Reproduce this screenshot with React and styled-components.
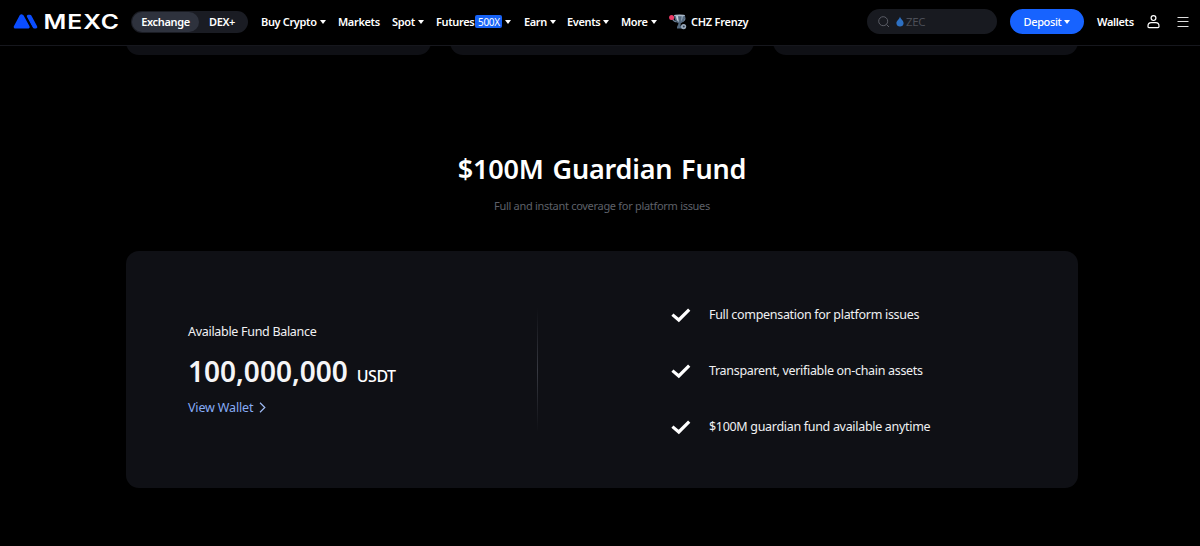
import React from 'react';
import styled, { createGlobalStyle } from 'styled-components';

const navItems = [
	{ label: 'Buy Crypto', width: 77, arrow: true },
	{ label: 'Markets', width: 54 },
	{ label: 'Spot', width: 44, arrow: true },
	{ label: 'Futures', width: 88, badge: '500X', arrow: true },
	{ label: 'Earn', width: 43, arrow: true },
	{ label: 'Events', width: 54, arrow: true },
	{ label: 'More', width: 48, arrow: true },
];

const benefits = [
	'Full compensation for platform issues',
	'Transparent, verifiable on-chain assets',
	'$100M guardian fund available anytime',
];

function Logo() {
	return (
		<svg width="112" height="24" viewBox="0 -3 112 24">
			<g fill="#0b4dff" stroke="#0b4dff" strokeWidth="3" strokeLinejoin="round">
				<path d="M2.2 13.9 L7.9 3.1 Q8.5 2.6 9.2 3.1 L15.2 13.9 Z" />
				<path d="M15.2 3.2 L17 3.2 L22.8 13.9 L21.2 13.9 Z" />
			</g>
			<path d="M12.4 2 L19.4 15.6" stroke="#000" strokeWidth="0.9" />
			<text
				x="30.5"
				y="15.8"
				textLength="76.5"
				lengthAdjust="spacingAndGlyphs"
				fill="#fff"
				fontFamily="Inter, sans-serif"
				fontSize="20"
				fontWeight="600"
				letterSpacing="0.8"
			>
				MEXC
			</text>
		</svg>
	);
}

function Trophy() {
	return (
		<svg width="18" height="16" viewBox="0 0 18 16">
			<path d="M3.5 2.5 Q3 7 7.5 8 M15.5 2.5 Q17 7 12 8" fill="none" stroke="#71859b" strokeWidth="1.2" />
			<path d="M5 1 H16 Q15.5 8 11.8 9.2 L11.5 12 H14 V14.5 H8 V13 L9.6 9.4 Q5.5 8 5 1 Z" fill="#52677d" />
			<path d="M7 2 H9 L9.8 8 Q7.3 6.5 7 2 Z" fill="#c3d0dc" />
			<path d="M12.6 2 H14 Q13.8 6 12 7.5 Z" fill="#8ea2b5" />
			<ellipse cx="10.5" cy="1.4" rx="5.4" ry="0.9" fill="#a9b8c8" />
			<circle cx="2.6" cy="3.4" r="2.5" fill="#ee3b67" />
			<circle cx="14.6" cy="12.6" r="2.6" fill="#9aa9ba" />
			<path d="M13.6 12 L15 11.4 L15.9 12.6 L14.8 13.8 Z" fill="#2c3c50" />
		</svg>
	);
}

function SearchIcon() {
	return (
		<svg width="12" height="12" viewBox="0 0 12 12" fill="none" stroke="#5b5d66">
			<circle cx="5.2" cy="5.2" r="4.5" />
			<path d="M8.5 8.5 L11 11" />
		</svg>
	);
}

function Drop() {
	return (
		<svg width="8" height="11" viewBox="0 0 8 11">
			<path d="M4 0.5 C4.4 3 7.6 4.4 7.6 7.2 C7.6 9.2 6 10.5 4 10.5 C2 10.5 0.4 9.2 0.4 7.2 C0.4 4.8 3.4 3.4 4 0.5 Z" fill="#2d70c2" />
		</svg>
	);
}

function UserIcon() {
	return (
		<svg width="13" height="14" viewBox="0 0 13 14" fill="none" stroke="#fff" strokeWidth="1.2">
			<circle cx="6.5" cy="3.1" r="2.4" />
			<path d="M4.2 7.7 H8.8 C10.6 7.7 12 9.2 12 11 V11.6 Q12 12.6 11 12.6 H2 Q1 12.6 1 11.6 V11 C1 9.2 2.4 7.7 4.2 7.7 Z" />
		</svg>
	);
}

function MenuIcon() {
	return (
		<svg width="12" height="10" viewBox="0 0 12 10" stroke="#dedede" strokeWidth="1">
			<path d="M0.5 0.5 H11.5 M0.5 4.5 H11.5 M0.5 9.5 H11.5" />
		</svg>
	);
}

function Check() {
	return (
		<svg width="20" height="16" viewBox="0 0 20 16">
			<path d="M1.4 7.6 L7.8 13 L18.2 2.6" fill="none" stroke="#fff" strokeWidth="3.2" />
		</svg>
	);
}

export default function App() {
	return (
		<Page>
			<GlobalStyle />
			<Header>
				<LogoLink><Logo /></LogoLink>
				<Switcher>
					<SwitchOption $active>Exchange</SwitchOption>
					<SwitchOption>DEX+</SwitchOption>
				</Switcher>
				<Nav>
					{navItems.map((item) => (
						<NavItem key={item.label} $width={item.width}>
							{item.label}
							{item.badge && <Badge>{item.badge}</Badge>}
							{item.arrow && <Arrow />}
						</NavItem>
					))}
					<Campaign><Trophy />CHZ Frenzy</Campaign>
				</Nav>
				<Search>
					<SearchIcon />
					<Hint><Drop />ZEC</Hint>
				</Search>
				<Deposit>Deposit<Arrow /></Deposit>
				<Wallets>Wallets</Wallets>
				<UserButton><UserIcon /></UserButton>
				<MenuIcon />
			</Header>
			<Content>
				<CardsRow>
					<CardEnd />
					<CardEnd />
					<CardEnd />
				</CardsRow>
				<Title>$100M Guardian Fund</Title>
				<Subtitle>Full and instant coverage for platform issues</Subtitle>
				<FundPanel>
					<Balance>
						<BalanceLabel>Available Fund Balance</BalanceLabel>
						<Amount>
							<AmountValue>100,000,000</AmountValue>
							<Currency>USDT</Currency>
						</Amount>
						<WalletLink>
							View Wallet
							<svg width="7" height="11" viewBox="0 0 7 11" fill="none" stroke="#9fbcf5" strokeWidth="1.2">
								<path d="M1 0.8 L5.8 5.5 L1 10.2" />
							</svg>
						</WalletLink>
					</Balance>
					<Divider />
					<Benefits>
						{benefits.map((benefit) => (
							<Benefit key={benefit}>
								<Check />
								{benefit}
							</Benefit>
						))}
					</Benefits>
				</FundPanel>
			</Content>
		</Page>
	);
};

const GlobalStyle = createGlobalStyle`
	* {
		box-sizing: border-box;
	}

	body {
		margin: 0;
		background: #000;
		overflow: hidden;
	}

	svg {
		display: block;
		flex-shrink: 0;
	}
`;

const Page = styled.div`
	width: 1200px;
	height: 546px;
	background: #000;
	color: #fff;
	font-family: 'Noto Sans', 'Open Sans', sans-serif;
	white-space: nowrap;
`;

const Header = styled.header`
	display: flex;
	align-items: center;
	width: 100%;
	height: 46px;
	padding: 0 10px 2px 13px;
	border-bottom: 1px solid #16171d;
	font-size: 11px;
	font-weight: 600;
	letter-spacing: -0.35px;
`;

const LogoLink = styled.div`
	width: 118px;
`;

const Switcher = styled.div`
	display: flex;
	align-items: center;
	width: 117px;
	height: 22px;
	padding: 1px;
	border-radius: 11px;
	background: #1a1c23;
`;

const SwitchOption = styled.div`
	display: flex;
	align-items: center;
	justify-content: center;
	width: ${(props) => (props.$active ? '67px' : '46px')};
	height: 20px;
	border-radius: 10px;
	background: ${(props) => (props.$active ? '#2e323d' : 'transparent')};
`;

const Nav = styled.nav`
	display: flex;
	align-items: center;
	width: 606px;
	padding-left: 13px;
`;

const NavItem = styled.div`
	display: flex;
	align-items: center;
	flex: 0 0 ${(props) => props.$width}px;
`;

const Arrow = styled.span`
	width: 0;
	height: 0;
	margin-left: 3px;
	border: 3px solid transparent;
	border-top: 4px solid currentColor;
	border-bottom: 0;
`;

const Badge = styled.span`
	display: flex;
	align-items: center;
	justify-content: center;
	width: 27px;
	height: 13px;
	margin-left: 1px;
	border-radius: 2px;
	background: #1763f6;
	font-size: 10px;
	font-weight: 400;
`;

const Campaign = styled.div`
	display: flex;
	align-items: center;
	gap: 4px;
	letter-spacing: -0.25px;
`;

const Search = styled.div`
	display: flex;
	align-items: center;
	width: 130px;
	height: 25px;
	margin-left: 13px;
	padding-left: 11px;
	border-radius: 13px;
	background: #181a20;
`;

const Hint = styled.div`
	display: flex;
	align-items: center;
	gap: 2px;
	margin-left: 6px;
	color: #4b4e57;
	font-size: 11.5px;
	font-weight: 400;
`;

const Deposit = styled.div`
	display: flex;
	align-items: center;
	justify-content: center;
	width: 74px;
	height: 25px;
	margin-left: 13px;
	border-radius: 13px;
	background: #1763ff;
	font-weight: 500;
`;

const Wallets = styled.div`
	width: 50px;
	margin-left: 13px;
`;

const UserButton = styled.div`
	width: 30px;
`;

const Content = styled.main`
	display: flex;
	flex-direction: column;
	align-items: center;
	padding-left: 4px;
`;

const CardsRow = styled.div`
	display: flex;
	align-items: flex-end;
	gap: 19px;
	width: 952px;
	height: 9px;
	overflow: hidden;
`;

const CardEnd = styled.div`
	flex: 1;
	height: 60px;
	border-radius: 13px;
	background: #0f1015;
`;

const Title = styled.h2`
	margin: 95px 0 0;
	font-size: 27px;
	line-height: 38px;
	font-weight: 600;
	letter-spacing: -0.2px;
	word-spacing: 2px;
`;

const Subtitle = styled.p`
	margin: 9px 0 0;
	color: #5e6069;
	font-size: 11px;
	line-height: 18px;
	letter-spacing: -0.3px;
`;

const FundPanel = styled.section`
	display: flex;
	align-items: center;
	width: 952px;
	height: 237px;
	margin-top: 36px;
	border-radius: 13px;
	background: #0f1015;
`;

const Balance = styled.div`
	width: 411px;
	padding-left: 62px;
`;

const BalanceLabel = styled.div`
	font-size: 12.5px;
	line-height: 18px;
	letter-spacing: -0.3px;
	color: #f2f2f4;
`;

const Amount = styled.div`
	display: flex;
	align-items: baseline;
	gap: 9px;
	margin-top: 11px;
	line-height: 38px;
`;

const AmountValue = styled.span`
	font-size: 28px;
	font-weight: 600;
	color: #f5f5f7;
`;

const Currency = styled.span`
	font-size: 16px;
	font-weight: 500;
	letter-spacing: -0.5px;
`;

const WalletLink = styled.a`
	display: flex;
	align-items: center;
	gap: 6px;
	margin-top: 4px;
	color: #86abf6;
	font-size: 12.5px;
	line-height: 18px;
	letter-spacing: -0.15px;
`;

const Divider = styled.div`
	width: 1px;
	height: 124px;
	background: linear-gradient(transparent, #373941 50%, transparent);
`;

const Benefits = styled.div`
	display: flex;
	flex-direction: column;
	gap: 38px;
	padding: 2px 0 0 133px;
`;

const Benefit = styled.div`
	display: flex;
	align-items: center;
	gap: 18px;
	height: 18px;
	font-size: 12.5px;
	letter-spacing: -0.31px;
	color: #f0f0f2;
`;
